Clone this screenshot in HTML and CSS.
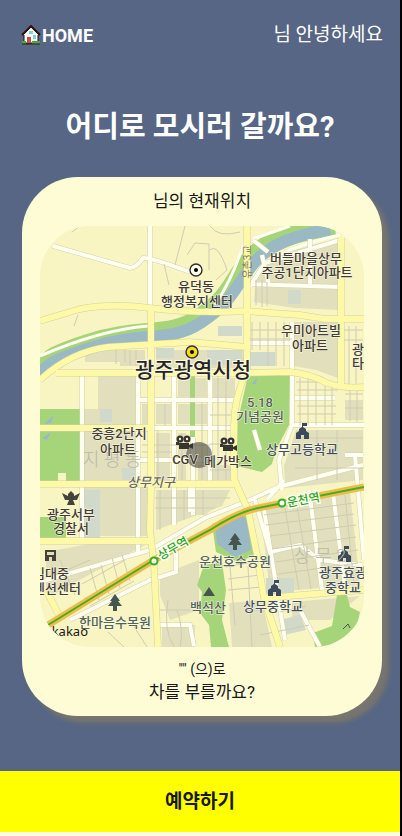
FILE: index.html
```html
<!DOCTYPE html>
<html lang="ko">
<head>
<meta charset="utf-8">
<meta name="viewport" content="width=device-width, initial-scale=1">
<title>HOME</title>
<link rel="stylesheet" href="styles.css">
</head>
<body>
<div class="app">
  <header class="topbar">
    <a class="home" href="#">
      <svg class="home-icon" viewBox="0 0 20 20" aria-hidden="true">
        <path d="M3 9v9h14V9l-7-7z" fill="#fff" stroke="#171010"/>
        <path d="M1 10L10 1l9 9" fill="none" stroke="#301411" stroke-width="2"/>
        <path d="M3 10L10 3l7 7" fill="none" stroke="#ede0d0"/>
        <path d="M6 12h4v6H6z" fill="#c94c43"/>
        <path d="M12 10h3v4h-3zM8 6h4v3H8z" fill="#73d6ed"/>
        <path d="M1 16h4v3H1zM11 16h8v3h-8z" fill="#54a632"/>
        <path d="M1 19h18" stroke="#102810"/>
      </svg>HOME</a>
    <p class="greeting">님 안녕하세요</p>
  </header>

  <main>
    <h1>어디로 모시러 갈까요?</h1>
    <section class="card">
      <h2>님의 현재위치</h2>
      <svg class="map" viewBox="40 226 324 421" role="img" aria-label="현재위치 지도">
        <defs>
          <g id="school" fill="#3d4a5c"><path d="M-6 5V-1L-3-3V-5L0-7V-11H5V-8H1V-7L4-5V-3L7-1V5H2V1H-1V5z"/></g>
          <g id="tree" fill="#46564e"><path d="M0-9L5-2H3L7 3H2V8H-2V3H-7L-3-2H-5z"/></g>
          <g id="camera" fill="#383530"><circle cx="-4" cy="-4" r="3.500"/><circle cx="3" cy="-4" r="3.500"/><path d="M-5 0H5V2L9 0V6L5 4V6H-5zM-8-1H-5V2H-8z"/><circle cx="-4" cy="-4" r="1.200" fill="#eee"/><circle cx="3" cy="-4" r="1.200" fill="#eee"/></g>
        </defs>
        <rect class="land" x="40" y="226" width="324" height="421"/>

        <g class="block">
          <path d="M256 272L275 255L340 238V310L295 308L254 302zM98 376H136V480H84V409H98z"/>
          <path d="M294 322H338V378L316 370L294 366zM296 430H363V480L285 488L284 466zM156 350H245V368H156z"/>
          <path d="M84 487H148V536H84zM213 378H235V398H213zM178 378H207V397H178zM156 404H171V424H156zM178 404H207V424H178z"/>
          <path d="M156 433H170V480H156zM178 433H186V480H178zM198 465H232V480H198zM142 404H148V424H142zM156 490H230L222 506L156 530z"/>
          <path d="M229 603L262 600L272 647H232zM160 575L199 560V610L170 620L160 595zM162 625H195V647H162zM85 350H145V366H120V362H85z"/>
          <path d="M260 508L350 492L360 585L270 592zM292 602L360 596L330 620H292zM345 400H363V420H345zM46 552L100 542L145 545L70 585L46 600zM198 490H230L206 515H198z"/>
        </g>
        <g class="civic">
          <path d="M100 409H112V422H100zM84 490H100V540H84zM207 350H242V365H207zM249 352H275V366H249zM288 290H301V304H288zM122 468H136V480H122zM266 578H294V594H266zM280 620L300 615L306 630L284 635zM156 348H174V358H156zM218 326H242V336H218z"/>
        </g>

        <g class="park">
          <path d="M40 409H80V482H66V473H58V482H40zM40 517H66V538H40z"/>
          <path d="M248 375H290L289 425L276 450L272 464L262 472L236 466L238 420z"/>
          <path d="M190 376H195V437H190zM204 565L222 562L226 590L222 620L229 647H211L209 625L200 613L202 592L197 585z"/>
          <path d="M337 595H347L350 607L360 612L355 635L332 647H315L313 633L332 626z"/>
          <path d="M212 524L246 514L256 555L238 562L216 552z"/>
        </g>
        <path class="water" d="M215 523L240 514L247 519L251 550L235 557L217 544z"/>
        <path class="water" d="M44 424L54 415L51 423zM42 438L51 432L47 440zM252 384L257 377L256 384z"/>

        <path class="bank" d="M335 226C296 230 264 241 247 264S229 299 199 319S140 327 88 344S54 362 38 371"/>
        <path class="river" d="M330 229C298 235 268 243 250 268S230 303 200 323S142 331 90 348S54 365 38 373"/>
        <path class="line light" d="M253 239L290 226M148 326Q100 330 40 356M215 305Q231 280 239 257L246 240M340 235Q280 248 259 270L245 298"/>

        <g class="street-edge">
          <path id="streets" d="M53 246L130 268Q136 268 143 258Q150 257 190 272M150 226V312M82 375V540M138 374V555M174 374V525M210 374V485M138 400H235M150 428H235M138 460H210M292 322V425L279 460L282 490M290 425H364M193 437V515M190 484V512M345 455H363M253 240L268 252M246 292L265 263L340 240M250 284L341 287M262 255L269 285M310 239V285M245 343H290M295 398H335M254 430L260 450M40 582L150 550L205 518L250 500L278 487L363 465M70 620L150 580L176 572V545M158 625H190L194 646M255 500L270 552L300 545L320 560L362 565M264 510L285 640M284 480L267 500M309 490L322 590M300 610L320 647M333 493L345 588M355 455L364 560"/>
          <use href="#streets" class="street-fill"/>
        </g>

        <g class="lanes">
          <path d="M185 226L175 265M187 255L195 243L209 244V270M210 226Q218 238 240 232M210 250Q218 243 227 270L216 280M164 264L169 285M78 315L74 326M80 226L72 232M250 280L247 310M256 280V305M262 280V307M267 282V306M125 346V362M116 348V364M130 350V365M136 350V366"/>
          <path d="M250 330H292M250 339H292M252 322V350M260 322V350M268 322V366M276 322V366M284 322V366M297 390H338M296 382H327M297 406H336M297 414H336M300 378V425M308 378V425M316 382V425M325 384V425M332 388V425M345 394H363M345 408H363M350 390V421M357 390V422M342 330H363M342 340H363M349 326V385M356 326V385"/>
          <path d="M142 445H210M142 452H172M158 431V482M165 404V426M182 433V480M202 403V480M218 375V480M226 376V480M210 415H235M210 444H235M210 470H235M295 438H363M317 430V480M337 430V480M295 468H363M155 498H230M155 508H215M160 490V530M184 490V520M203 490V515"/>
          <path d="M264 515L354 503M266 525L354 514M270 536L356 525M272 549L356 537M275 562L358 550M278 574L358 563M285 508L299 590M297 506L311 589M345 495L354 584M226 567L265 560M228 579L260 575M228 590L262 587M230 567L235 625M248 566L252 647M156 610H190M168 600Q163 630 174 647M177 610Q184 630 180 647M280 612L306 606M260 635L309 625M247 610H262"/>
          <path d="M82 584L125 560M84 599L128 576M90 606L134 581M90 568L99 600M101 565L109 594M112 558L120 588M122 555L130 581M60 560L75 595M55 575L90 560M108 632L124 647M133 625L147 647"/>
        </g>

        <g class="main-edge">
          <path id="roads" d="M40 321L80 309Q112 303 150 308Q200 314 245 311L300 315L325 319H364M40 380Q70 352 108 347L190 342L247 347M56 373H240L290 372Q310 374 327 383Q345 389 364 387M151 306V490L150 530L154 565L158 647M247 226V370Q234 398 234 426V479L248 510L257 555L264 598L280 647M341 238V385M40 428H150M40 484H234M40 541H153M264 598L364 590M47 592L60 617"/>
          <use href="#roads" class="main-fill"/>
        </g>
        <path class="rail-bed" d="M48 625L152 561L210 530Q238 512 258 508L364 487"/>
        <path class="rail" d="M48 625L152 561L210 530Q238 512 258 508L364 487"/>
        <g class="station"><circle cx="154" cy="561" r="3.500"/><circle cx="282" cy="503" r="3.500"/></g>

        <circle cx="199" cy="455" r="13" fill="#4b4940" opacity=".62"/>
        <g fill="#fffff0" stroke="#34302c" stroke-width="1.400"><circle cx="196" cy="270" r="6"/><circle cx="192" cy="352" r="6" fill="#f5dc19"/></g>
        <circle cx="196" cy="270" r="2"/><circle cx="192" cy="352" r="2"/>
        <use href="#camera" x="184" y="443"/><use href="#camera" x="228" y="445"/>
        <use href="#school" x="302" y="434"/><use href="#school" x="274" y="591"/><use href="#school" x="344" y="557"/>
        <use href="#tree" x="235" y="542"/><use href="#tree" x="115" y="603"/>
        <path d="M203 596L209 587L215 596z" fill="#46564e"/>
        <path d="M62 493L68 496V494L71 491L74 494V496L80 493L77 500L73 500L75 505H67L69 500L65 500z" fill="#45423a"/>
        <path d="M45 550H56V561H52V557H49V561H45zM47 552V555H54V552z" fill="#45423a" fill-rule="evenodd"/>
        <path d="M343 629L348 624L350 628" fill="none" stroke="#46564e"/>

        <g class="faded"><text x="112" y="466">지 평 동</text><text x="320" y="562">상 무 2</text></g>
        <g class="label">
          <text x="196" y="291">유덕동</text><text x="197" y="306">행정복지센터</text>
          <text x="306" y="263">버들마을상무</text><text x="307" y="277">주공1단지아파트</text>
          <text x="311" y="335">우미아트빌</text><text x="310" y="350">아파트</text>
          <text x="358" y="354">광</text><text x="358" y="368">타</text>
          <text x="119" y="438">중흥2단지</text><text x="118" y="454">아파트</text>
          <text x="185" y="464">CGV</text><text x="228" y="466">메가박스</text>
          <text x="71" y="519">광주서부</text><text x="71" y="533">경찰서</text>
          <text x="51" y="578">김대중</text><text x="51" y="593">컨벤션센터</text>
        </g>
        <g class="label cool">
          <text x="302" y="454">상무고등학교</text><text x="273" y="611">상무중학교</text>
          <text x="343" y="577">광주효광</text><text x="343" y="592">중학교</text>
        </g>
        <g class="label nature">
          <text x="260" y="407">5.18</text><text x="260" y="421">기념공원</text>
          <text x="235" y="566">운천호수공원</text><text x="208" y="612">백석산</text>
          <text x="115" y="627">한마음수목원</text>
        </g>
        <text class="label district" x="151" y="487">상무지구</text>
        <text class="city" x="193" y="377">광주광역시청</text>
        <text class="bridge" transform="translate(251 262) rotate(-90)">유촌3교</text>
        <g class="stop"><text transform="translate(175 552) rotate(-30)">상무역</text><text transform="translate(304 504) rotate(-10)">운천역</text></g>
        <text class="brand" x="88" y="636">kakao</text>
      </svg>
      <p class="place">"" (으)로</p>
      <p class="question">차를 부를까요?</p>
    </section>
  </main>
  <button class="reserve" type="button">예약하기</button>
</div>
</body>
</html>
```
FILE: styles.css
```css
* {
  box-sizing: border-box;
}

html {
  background: #000;
}

body {
  margin: 0 2px 0 0;
  min-height: 100vh;
  background: #fafae6;
  font-family: Roboto, "Noto Sans CJK KR", sans-serif;
  color: #181818;
}

h1,
h2,
p {
  margin: 0;
  font-weight: 400;
}

.app {
  background: #566684;
}

.topbar {
  display: flex;
  justify-content: space-between;
  align-items: center;
  height: 70px;
  padding: 0 17px 0 21px;
  color: #fff;
}

.home {
  display: flex;
  align-items: center;
  gap: 1px;
  color: inherit;
  font-size: 18px;
  font-weight: 700;
  text-decoration: none;
}

.home-icon {
  width: 20px;
  height: 20px;
}

.greeting {
  font-size: 19px;
  font-weight: 400;
  line-height: 24px;
}

h1 {
  padding: 38px 0 31px;
  color: #fff;
  font-size: 29px;
  font-weight: 700;
  line-height: 38px;
  text-align: center;
}

.card {
  margin: 0 18px 0 22px;
  padding: 12px 18px;
  border-radius: 56px;
  background: #fefcd4;
  box-shadow: 7px 7px 5px #77756f;
  text-align: center;
}

.card h2,
.question {
  font-size: 17px;
  line-height: 24px;
}

.place {
  font-size: 14px;
  line-height: 22px;
}

.map {
  display: block;
  width: 100%;
  margin: 13px 0 11px;
  border-radius: 50px;
  font-family: Roboto, "Noto Sans CJK KR", sans-serif;
}

.reserve {
  display: block;
  width: 100%;
  height: 61px;
  margin-top: 55px;
  padding: 0 0 4px;
  border: 0;
  background: #ff0;
  color: #181800;
  font: 700 19px Roboto, "Noto Sans CJK KR", sans-serif;
}

.land {
  fill: #f8f5c2;
}

.block {
  fill: #e2dfbd;
}

.civic {
  fill: #d1d9cb;
}

.park {
  fill: #a6d579;
}

.water {
  fill: #9bb9c4;
}

.bank,
.river,
.line,
.lanes,
.street-edge,
.main-edge,
.rail-bed,
.rail {
  fill: none;
}

.bank {
  stroke: #a6d579;
  stroke-width: 20px;
}

.river {
  stroke: #9bb9c4;
  stroke-width: 12px;
}

.light {
  stroke: #fffff2;
  stroke-width: 3px;
}

.street-edge {
  stroke: #d5d1b0;
  stroke-width: 5px;
}

.street-fill {
  stroke: #fffff2;
  stroke-width: 4px;
}

.lanes {
  stroke: #cfccb0;
  stroke-width: 1px;
}

.main-edge {
  stroke: #d5cfa1;
  stroke-width: 7px;
  stroke-linejoin: round;
}

.main-fill {
  stroke: #fdf9a6;
  stroke-width: 6px;
}

.rail-bed {
  stroke: #ecbd4c;
  stroke-width: 7px;
}

.rail {
  stroke: #49ad20;
  stroke-width: 2px;
}

.station {
  fill: #fffff2;
  stroke: #39af24;
  stroke-width: 2px;
}

.label {
  fill: #443b32;
  font-size: 13px;
  font-weight: 500;
  text-anchor: middle;
  paint-order: stroke;
  stroke: #faf9e2;
  stroke-width: 1px;
}

.cool {
  fill: #434e5c;
}

.nature {
  fill: #526358;
}

.district {
  fill: #6c675b;
  font-style: italic;
}

.faded {
  fill: #b7b8aa;
  font-size: 18px;
  font-weight: 300;
  text-anchor: middle;
}

.city {
  fill: #28251f;
  font-size: 21px;
  font-weight: 500;
  text-anchor: middle;
  paint-order: stroke;
  stroke: #faf9e2;
  stroke-width: 2px;
}

.bridge {
  fill: #847b5e;
  font-size: 10px;
  text-anchor: middle;
}

.stop {
  fill: #2ca41e;
  font-size: 12px;
  font-weight: 500;
  text-anchor: middle;
  paint-order: stroke;
  stroke: #fffff2;
  stroke-width: 3px;
}

.brand {
  fill: #181818;
  font-family: "Noto Sans", sans-serif;
  font-size: 13px;
  text-anchor: end;
}
```
